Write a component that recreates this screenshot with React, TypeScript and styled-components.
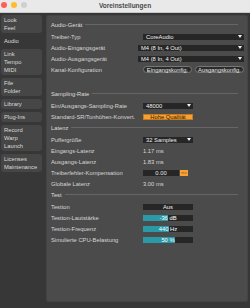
import { createGlobalStyle } from 'styled-components'
import styled from 'styled-components'

const GlobalStyle = createGlobalStyle`
  html, body {
    margin: 0;
    padding: 0;
    background: #373737;
  }
  body {
    font-family: 'Liberation Sans', Arial, sans-serif;
    font-size: 5.8px;
    color: #d6d6d6;
  }
`

const Window = styled.div({
  width: 250,
  height: 308,
  display: 'flex',
  flexDirection: 'column',
  background: '#373737',
  overflow: 'hidden',
})

const TitleBar = styled.div({
  height: 13,
  flex: '0 0 13px',
  display: 'grid',
  gridTemplateColumns: '1fr auto 1fr',
  alignItems: 'center',
  background: '#e9e9e9',
  borderBottom: '1px solid #c9c9c9',
  boxSizing: 'border-box',
})

const Lights = styled.div({
  display: 'flex',
  gap: 4,
  paddingLeft: 1,
  marginTop: -2,
})

const Light = styled.span<{ $color: string }>(({ $color }) => ({
  width: 6,
  height: 6,
  borderRadius: '50%',
  background: $color,
}))

const Title = styled.div({
  fontSize: 6.5,
  fontWeight: 'bold',
  color: '#4a4a4a',
  marginTop: -2,
})

const Body = styled.div({
  flex: 1,
  display: 'flex',
  gap: 4,
  padding: '2px 2px 6px 1px',
  minHeight: 0,
})

const Sidebar = styled.div({
  width: 41,
  display: 'flex',
  flexDirection: 'column',
  gap: 3,
})

const Tab = styled.div<{ $active?: boolean }>(({ $active }) => ({
  background: $active ? 'transparent' : '#464646',
  borderRadius: 3,
  padding: '1px 3px',
  lineHeight: '8px',
  color: '#dadada',
}))

const Panel = styled.div({
  flex: 1,
  background: '#4b4b4b',
  borderRadius: 3,
  padding: '4px 4px 0 5px',
  boxShadow: 'inset 0 0 0 1px #444',
})

const Section = styled.div<{ $extra?: number }>(({ $extra }) => ({
  display: 'flex',
  flexDirection: 'column',
  marginBottom: $extra || 0,
}))

const Heading = styled.div({
  height: 12,
  display: 'flex',
  alignItems: 'center',
  gap: 3,
  paddingBottom: 1,
  boxSizing: 'border-box',
  marginRight: 6,
  color: '#dcdcdc',
  '&::after': {
    content: '""',
    flex: 1,
    height: 1,
    background: '#666',
  },
})

const Row = styled.div({
  height: 11,
  display: 'grid',
  gridTemplateColumns: '92px 1fr',
  alignItems: 'center',
})

const Label = styled.span({
  whiteSpace: 'nowrap',
})

const Controls = styled.div<{ $shift?: number }>(({ $shift }) => ({
  display: 'flex',
  gap: 3,
  marginLeft: $shift ? -$shift : 0,
}))

const Select = styled.div<{ $width?: number }>(({ $width }) => ({
  width: $width || '100%',
  height: 6,
  display: 'flex',
  alignItems: 'center',
  justifyContent: 'space-between',
  background: '#262626',
  color: '#f0f0f0',
  padding: '0 2px 0 3px',
  boxSizing: 'border-box',
  lineHeight: '6px',
}))

const Pill = styled.div<{ $width: number }>(({ $width }) => ({
  width: $width,
  height: 7,
  display: 'flex',
  alignItems: 'center',
  justifyContent: 'center',
  background: '#2c2c2c',
  border: '1px solid #777',
  borderRadius: 4,
  boxSizing: 'border-box',
  color: '#e8e8e8',
}))

const Box = styled.div<{ $width: number; $orange?: boolean }>(({ $width, $orange }) => ({
  width: $width,
  height: 6,
  display: 'flex',
  alignItems: 'center',
  justifyContent: 'center',
  background: $orange ? '#f7a035' : '#262626',
  color: $orange ? '#2a1a00' : '#eaeaea',
  boxSizing: 'border-box',
  border: $orange ? '1px solid #c97a1a' : 'none',
  lineHeight: '6px',
}))

const Unit = styled.div({
  width: 8,
  height: 6,
  background: '#f7a035',
  color: '#9a5a10',
  fontSize: 4,
  display: 'flex',
  alignItems: 'center',
  justifyContent: 'center',
})

const Value = styled.span({
  color: '#d8d8d8',
})

const Slider = styled.div({
  position: 'relative',
  width: 50,
  height: 6,
  background: '#262626',
  lineHeight: '6px',
  color: '#ffffff',
  textAlign: 'center',
})

const Fill = styled.div({
  position: 'absolute',
  left: 0,
  top: 0,
  bottom: 0,
  background: '#2a9aa9',
})

const SliderText = styled.span({
  position: 'relative',
})

function Arrow() {
  return (
    <svg width="4" height="3" viewBox="0 0 4 3">
      <path d="M0 0 H4 L2 3 Z" fill="#f0f0f0" />
    </svg>
  )
}

const tabs: { lines: string[]; active?: boolean }[] = [
  { lines: ['Look', 'Feel'] },
  { lines: ['Audio'], active: true },
  { lines: ['Link', 'Tempo', 'MIDI'] },
  { lines: ['File', 'Folder'] },
  { lines: ['Library'] },
  { lines: ['Plug-Ins'] },
  { lines: ['Record', 'Warp', 'Launch'] },
  { lines: ['Licenses', 'Maintenance'] },
]

function SliderField({ pct, text }: { pct: number; text: string }) {
  return (
    <Slider>
      <Fill style={{ width: `${pct}%` }} />
      <SliderText>{text}</SliderText>
    </Slider>
  )
}

function App() {
  return (
    <Window>
      <GlobalStyle />
      <TitleBar>
        <Lights>
          <Light $color="#fe5f57" />
          <Light $color="#febc2e" />
          <Light $color="#cfcfcf" />
        </Lights>
        <Title>Voreinstellungen</Title>
        <div />
      </TitleBar>
      <Body>
        <Sidebar>
          {tabs.map((t) => (
            <Tab key={t.lines[0]} $active={t.active}>
              {t.lines.map((l) => (
                <div key={l}>{l}</div>
              ))}
            </Tab>
          ))}
        </Sidebar>
        <Panel>
          <Section $extra={13}>
            <Heading>Audio-Gerät</Heading>
            <Row>
              <Label>Treiber-Typ</Label>
              <Controls>
                <Select>
                  CoreAudio <Arrow />
                </Select>
              </Controls>
            </Row>
            <Row>
              <Label>Audio-Eingangsgerät</Label>
              <Controls $shift={5}>
                <Select>
                  M4 (8 In, 4 Out) <Arrow />
                </Select>
              </Controls>
            </Row>
            <Row>
              <Label>Audio-Ausgangsgerät</Label>
              <Controls $shift={5}>
                <Select>
                  M4 (8 In, 4 Out) <Arrow />
                </Select>
              </Controls>
            </Row>
            <Row>
              <Label>Kanal-Konfiguration</Label>
              <Controls>
                <Pill $width={49}>Eingangskonfig.</Pill>
                <Pill $width={49}>Ausgangskonfig.</Pill>
              </Controls>
            </Row>
          </Section>

          <Section>
            <Heading>Sampling-Rate</Heading>
            <Row>
              <Label>Ein/Ausgangs-Sampling-Rate</Label>
              <Controls>
                <Select $width={50}>
                  48000 <Arrow />
                </Select>
              </Controls>
            </Row>
            <Row>
              <Label>Standard-SR/Tonhöhen-Konvert.</Label>
              <Controls>
                <Box $width={50} $orange>
                  Hohe Qualität
                </Box>
              </Controls>
            </Row>
          </Section>

          <Section>
            <Heading>Latenz</Heading>
            <Row>
              <Label>Puffergröße</Label>
              <Controls>
                <Select $width={50}>
                  32 Samples <Arrow />
                </Select>
              </Controls>
            </Row>
            <Row>
              <Label>Eingangs-Latenz</Label>
              <Value>1.17 ms</Value>
            </Row>
            <Row>
              <Label>Ausgangs-Latenz</Label>
              <Value>1.83 ms</Value>
            </Row>
            <Row>
              <Label>Treiberfehler-Kompensation</Label>
              <Controls style={{ gap: 1 }}>
                <Box $width={36}>0.00</Box>
                <Unit>ms</Unit>
              </Controls>
            </Row>
            <Row>
              <Label>Globale Latenz</Label>
              <Value>3.00 ms</Value>
            </Row>
          </Section>

          <Section>
            <Heading>Test</Heading>
            <Row>
              <Label>Testton</Label>
              <Controls>
                <Box $width={50}>Aus</Box>
              </Controls>
            </Row>
            <Row>
              <Label>Testton-Lautstärke</Label>
              <Controls>
                <SliderField pct={50} text="-36 dB" />
              </Controls>
            </Row>
            <Row>
              <Label>Testton-Frequenz</Label>
              <Controls>
                <SliderField pct={52} text="440 Hz" />
              </Controls>
            </Row>
            <Row>
              <Label>Simulierte CPU-Belastung</Label>
              <Controls>
                <SliderField pct={64} text="50 %" />
              </Controls>
            </Row>
          </Section>
        </Panel>
      </Body>
    </Window>
  )
}

export default App
